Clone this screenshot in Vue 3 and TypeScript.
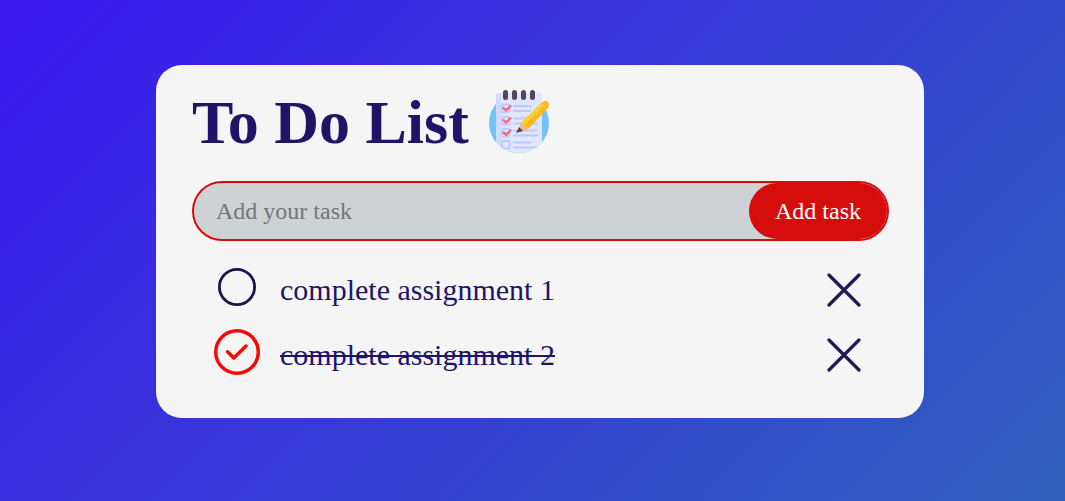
<script setup lang="ts">
import { ref } from 'vue'

interface Task {
  id: number
  text: string
  done: boolean
}

const draft = ref('')
const tasks = ref<Task[]>([
  { id: 1, text: 'complete assignment 1', done: false },
  { id: 2, text: 'complete assignment 2', done: true },
])

function addTask(): void {
  const text = draft.value.trim()
  if (!text) return
  tasks.value.push({ id: Date.now(), text, done: false })
  draft.value = ''
}

function removeTask(id: number): void {
  tasks.value = tasks.value.filter((task) => task.id !== id)
}
</script>

<template>
  <main class="page">
    <section class="card">
      <header class="heading">
        <h1>To Do List</h1>
        <svg class="logo" viewBox="0 0 64 64" aria-hidden="true">
          <defs>
            <clipPath id="disc">
              <path d="M0 0H64V33H62A30 30 0 0 1 2 33H0Z" />
            </clipPath>
          </defs>
          <circle cx="32" cy="33" r="30" fill="#74c2f6" />
          <g clip-path="url(#disc)">
            <path d="M9 6Q9 3 12 3H53Q55 3 55 6V64H9Z" fill="#dfe7fe" />
            <path d="M9 6Q9 3 12 3H14V64H9Z" fill="#cfdafc" />
            <g fill="none" stroke="#bccaf8" stroke-width="1.8" stroke-linecap="round">
              <path d="M27 16H44M27 21H43M27 28.500H44M27 33.500H50M27 40.500H50M27 45.500H50M27 52.500H44M27 57.500H50" />
              <rect x="15" y="14.500" width="7.500" height="7.500" rx="1" />
              <rect x="15" y="27" width="7.500" height="7.500" rx="1" />
              <rect x="15" y="39" width="7.500" height="7.500" rx="1" />
              <rect x="15" y="51" width="7.500" height="7.500" rx="1" />
            </g>
            <path d="M16.500 18L19 20.300L23.500 16M16.500 30.200L19 32.500L23.500 28.200M16.500 42.500L19 44.800L23.500 40.500" fill="none" stroke="#fb6580" stroke-width="2.4" stroke-linecap="round" stroke-linejoin="round" />
          </g>
          <g fill="#56435e">
            <rect x="16" y="0" width="5" height="10" rx="2.5" />
            <rect x="25" y="0" width="5" height="10" rx="2.5" />
            <rect x="34" y="0" width="5" height="10" rx="2.5" />
            <rect x="43" y="0" width="5" height="10" rx="2.5" />
          </g>
          <path d="M34 33L54 13L60 19L41 39Z" fill="#ffcf2e" />
          <path d="M37 36L57 16L60 19L41 39Z" fill="#fbb81e" />
          <path d="M54 13L56 11.500Q59 10 61 12Q63 15 61 18L60 19Z" fill="#ffb92e" />
          <path d="M34 33L41 39L37 41L31 42Z" fill="#f7b58c" />
          <path d="M32 37L36 41L29 43Z" fill="#56435e" />
        </svg>
      </header>

      <form class="entry" @submit.prevent="addTask">
        <input v-model="draft" class="entry-text" type="text" placeholder="Add your task" aria-label="Add your task" />
        <button class="entry-add" type="submit">Add task</button>
      </form>

      <ul class="tasks">
        <li v-for="task in tasks" :key="task.id" class="task">
          <label class="task-label">
            <span class="mark">
              <input v-model="task.done" class="mark-input" type="checkbox" />
              <svg v-if="task.done" class="mark-icon" viewBox="0 0 46 46" fill="none" stroke="#fd0505" aria-hidden="true">
                <circle cx="23" cy="23" r="21.300" stroke-width="3.400" />
                <path d="M13.500 22.800L19.800 29L32 17" stroke-width="3.400" stroke-linecap="round" stroke-linejoin="round" />
              </svg>
              <svg v-else class="mark-icon" viewBox="0 0 46 46" fill="none" stroke="#1d1450" aria-hidden="true">
                <circle cx="23" cy="23" r="17.600" stroke-width="2.800" />
              </svg>
            </span>
            <span class="task-text" :class="{ done: task.done }">{{ task.text }}</span>
          </label>
          <button class="remove" type="button" :aria-label="`Remove ${task.text}`" @click="removeTask(task.id)">
            <svg viewBox="0 0 34 34" fill="none" stroke="#231951" stroke-width="3.200" stroke-linecap="round" aria-hidden="true">
              <path d="M2 2L32 32M32 2L2 32" />
            </svg>
          </button>
        </li>
      </ul>
    </section>
  </main>
</template>

<style>
body {
  margin: 0;
}
</style>

<style scoped>
.page {
  box-sizing: border-box;
  min-height: 100vh;
  padding: 65px 0 65px 15px;
  background: linear-gradient(135deg, #3b17ef, #3060bb);
  font-family: "Liberation Serif", Georgia, serif;
  color: #211468;
}

.card {
  box-sizing: border-box;
  width: 100%;
  max-width: 768px;
  margin: 0 auto;
  padding: 25px 35px 31px 36px;
  border-radius: 26px;
  background: #f5f5f5;
}

.heading {
  display: flex;
  align-items: center;
  gap: 18px;
  margin-bottom: 27px;
}

h1 {
  margin: 0;
  font-size: 62px;
  line-height: 64px;
  font-weight: 700;
}

.logo {
  width: 64px;
  height: 64px;
}

.entry {
  display: flex;
  box-sizing: border-box;
  height: 60px;
  border: 2px solid #d60d0d;
  border-radius: 30px;
  background: #ced2d5;
}

.entry-text,
.entry-add {
  box-sizing: border-box;
  border: 0;
  font: 24px/28px "Liberation Serif", Georgia, serif;
}

.entry-text {
  flex: 1;
  min-width: 0;
  padding: 0 22px;
  background: transparent;
  color: #211468;
  outline: none;
}

.entry-text::placeholder {
  color: #757575;
  opacity: 1;
}

.entry-add {
  padding: 0 26px;
  border-radius: 28px;
  background: #d60d0d;
  color: #fff;
  cursor: pointer;
}

.tasks {
  margin: 16px 0 0;
  padding: 0;
  list-style: none;
}

.task {
  display: flex;
  align-items: center;
  justify-content: space-between;
  height: 65px;
  padding: 0 28px 0 22px;
}

.task-label {
  display: flex;
  align-items: center;
  gap: 20px;
  cursor: pointer;
}

.mark {
  position: relative;
  width: 46px;
  height: 46px;
  margin-bottom: 5px;
}

.mark-input {
  position: absolute;
  inset: 0;
  width: 100%;
  height: 100%;
  margin: 0;
  opacity: 0;
  cursor: pointer;
}

.mark-icon {
  display: block;
}

.task-text {
  font-size: 30px;
  line-height: 34px;
}

.done {
  text-decoration: line-through;
  text-decoration-thickness: 2px;
}

.remove {
  width: 34px;
  height: 34px;
  padding: 0;
  border: 0;
  background: none;
  cursor: pointer;
}

.remove svg {
  display: block;
}
</style>
